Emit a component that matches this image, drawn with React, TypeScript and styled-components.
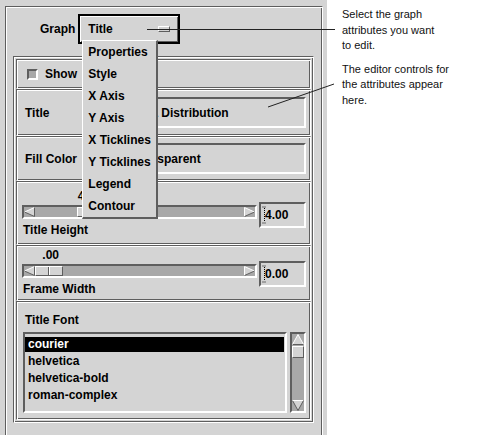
import React from 'react'
import styled, { createGlobalStyle, css } from 'styled-components'

const BG = '#d4d4d4'
const DARK = '#5e5e5e'
const LIGHT = '#ffffff'
const TROUGH = '#a8a8a8'

const MENU_ITEMS = [
  'Properties',
  'Style',
  'X Axis',
  'Y Axis',
  'X Ticklines',
  'Y Ticklines',
  'Legend',
  'Contour',
]

const FONTS = ['courier', 'helvetica', 'helvetica-bold', 'roman-complex']

const GlobalStyle = createGlobalStyle`
  html, body {
    margin: 0;
    padding: 0;
    background: #ffffff;
  }
  body {
    font-family: 'Liberation Sans', Arial, sans-serif;
  }
`

const etched = css`
  border: 1px solid;
  border-color: ${DARK} ${LIGHT} ${LIGHT} ${DARK};
  box-shadow: inset 1px 1px 0 ${LIGHT}, inset -1px -1px 0 ${DARK};
`

const sunken = css`
  border: 2px solid;
  border-color: ${DARK} ${LIGHT} ${LIGHT} ${DARK};
`

const Page = styled.div`
  position: relative;
  display: flex;
  width: 499px;
  height: 435px;
  overflow: hidden;
`

const EditorPanel = styled.div`
  width: 327px;
  flex-shrink: 0;
  box-sizing: border-box;
  padding: 6px 0 0 5px;
  background: ${BG};
  font-size: 12px;
  font-weight: bold;
  color: #000;
`

const OuterFrame = styled.div`
  ${etched};
  box-sizing: border-box;
  width: 318px;
  min-height: 450px;
`

const GraphRow = styled.div`
  display: flex;
  align-items: flex-start;
  gap: 3px;
  height: 49px;
  box-sizing: border-box;
  padding: 7px 0 0 34px;
`

const GraphLabel = styled.span`
  line-height: 30px;
`

const OptionButton = styled.div`
  position: relative;
  display: flex;
  align-items: center;
  box-sizing: border-box;
  width: 102px;
  height: 30px;
  border: 2px solid #000;
  padding-left: 8px;
  background: ${BG};
  box-shadow: inset 1px 1px 0 ${LIGHT}, inset -1px -1px 0 ${DARK};
`

const Indicator = styled.span`
  box-sizing: border-box;
  width: 12px;
  height: 6px;
  margin: 0 8px 0 auto;
  border: 1px solid;
  border-color: ${LIGHT} ${DARK} ${DARK} ${LIGHT};
`

const Menu = styled.ul`
  position: absolute;
  left: 2px;
  top: 24px;
  z-index: 3;
  width: 76px;
  margin: 0;
  padding: 0;
  list-style: none;
  box-sizing: border-box;
  background: ${BG};
  border-style: solid;
  border-width: 1px 2px 2px 1px;
  border-color: ${LIGHT} ${DARK} ${DARK} ${LIGHT};
`

const MenuItem = styled.li`
  height: 22px;
  line-height: 22px;
  padding-left: 5px;
  white-space: nowrap;
`

const InnerFrame = styled.div`
  ${etched};
  box-sizing: border-box;
  width: 301px;
  margin-left: 7px;
  padding: 2px;
`

const Section = styled.div<{ $h: number; $padTop?: number }>`
  ${etched};
  box-sizing: border-box;
  height: ${(p) => p.$h}px;
  padding-top: ${(p) => p.$padTop ?? 0}px;
`

const FieldRow = styled(Section)`
  display: flex;
  align-items: center;
  padding: 0 4px 0 8px;
`

const CheckRow = styled(Section)`
  display: flex;
  align-items: center;
  gap: 7px;
  padding-left: 10px;
`

const CheckBox = styled.span`
  ${sunken};
  box-sizing: border-box;
  width: 11px;
  height: 11px;
  background: ${TROUGH};
`

const TextField = styled.div<{ $w: number }>`
  ${sunken};
  box-sizing: border-box;
  width: ${(p) => p.$w}px;
  height: 31px;
  margin-left: auto;
  padding-left: 7px;
  display: flex;
  align-items: center;
  white-space: nowrap;
  overflow: hidden;
`

const ScaleBody = styled.div`
  display: flex;
  flex-direction: column;
  padding: 0 4px 0 5px;
`

const ValueLabel = styled.div`
  width: 28px;
  height: 14px;
  line-height: 14px;
  box-sizing: border-box;
  padding-right: 4px;
  text-align: right;
`

const TroughRow = styled.div`
  display: flex;
  align-items: center;
  gap: 2px;
  height: 14px;
  margin-top: 2px;
`

const Trough = styled.div`
  ${sunken};
  box-sizing: border-box;
  display: flex;
  width: 235px;
  height: 14px;
  background: ${TROUGH};
`

const Thumb = styled.div`
  position: relative;
  box-sizing: border-box;
  width: 28px;
  height: 100%;
  border: 1px solid;
  border-color: ${LIGHT} ${DARK} ${DARK} ${LIGHT};
  background: ${BG};
  &::after {
    content: '';
    position: absolute;
    left: 12px;
    top: 0;
    bottom: 0;
    width: 1px;
    background: ${DARK};
    box-shadow: 1px 0 0 ${LIGHT};
  }
`

const Spacer = styled.div`
  flex: 1;
`

const ValueField = styled.div`
  ${sunken};
  box-sizing: border-box;
  display: flex;
  align-items: center;
  width: 47px;
  height: 26px;
  margin-top: 6px;
  padding-left: 1px;
`

const Caption = styled.div`
  line-height: 14px;
  margin-top: 4px;
  padding-left: 1px;
`

const FontSection = styled(Section)`
  padding: 11px 4px 0 6px;
`

const FontLabel = styled.div`
  line-height: 14px;
  padding-left: 2px;
`

const ListRow = styled.div`
  display: flex;
  gap: 3px;
  height: 81px;
  margin-top: 5px;
`

const ListBox = styled.div`
  ${sunken};
  box-sizing: border-box;
  width: 264px;
  padding: 3px 1px 0 0;
`

const ListItem = styled.div<{ $selected?: boolean }>`
  height: 15px;
  line-height: 15px;
  margin-bottom: 2px;
  padding-left: 3px;
  background: ${(p) => (p.$selected ? '#000' : 'transparent')};
  color: ${(p) => (p.$selected ? '#fff' : '#000')};
`

const ScrollBar = styled.div`
  ${sunken};
  box-sizing: border-box;
  display: flex;
  flex-direction: column;
  width: 16px;
  background: ${TROUGH};
`

const ScrollThumb = styled.div`
  box-sizing: border-box;
  height: 12px;
  margin-top: 1px;
  border: 1px solid;
  border-color: ${LIGHT} ${DARK} ${DARK} ${LIGHT};
  background: ${BG};
`

const Notes = styled.div`
  flex: 1;
  padding: 7px 0 0 15px;
  font-size: 11px;
  line-height: 15.5px;
  color: #111;
`

const Note = styled.p`
  margin: 0 0 8px;
`

const Leaders = styled.svg`
  position: absolute;
  left: 0;
  top: 0;
  z-index: 5;
  pointer-events: none;
`

type Dir = 'left' | 'right' | 'up' | 'down'

const Arrow: React.FC<{ dir: Dir }> = ({ dir }) => {
  const horiz = dir === 'left' || dir === 'right'
  const w = horiz ? 11 : 12
  const h = horiz ? 10 : 11
  let pts: [number, number][]
  if (dir === 'left') pts = [[0.5, 5], [10.5, 0.5], [10.5, 9.5]]
  else if (dir === 'right') pts = [[10.5, 5], [0.5, 0.5], [0.5, 9.5]]
  else if (dir === 'up') pts = [[6, 0.5], [11.5, 10.5], [0.5, 10.5]]
  else pts = [[6, 10.5], [0.5, 0.5], [11.5, 0.5]]
  const [a, b, c] = pts
  return (
    <svg width={w} height={h} style={{ display: 'block', flexShrink: 0 }}>
      <polygon points={pts.map((p) => p.join(',')).join(' ')} fill={BG} />
      <line x1={a[0]} y1={a[1]} x2={b[0]} y2={b[1]} stroke={dir === 'down' ? DARK : LIGHT} />
      <line x1={b[0]} y1={b[1]} x2={c[0]} y2={c[1]} stroke={dir === 'right' || dir === 'down' ? LIGHT : DARK} />
      <line x1={c[0]} y1={c[1]} x2={a[0]} y2={a[1]} stroke={dir === 'up' ? LIGHT : DARK} />
    </svg>
  )
}

const IBeam: React.FC = () => (
  <svg width={5} height={18} style={{ display: 'block', marginRight: -2 }}>
    <line x1={2.5} y1={2} x2={2.5} y2={16} stroke="#000" strokeDasharray="1 1" />
    <line x1={0.5} y1={1} x2={4.5} y2={1} stroke="#000" strokeDasharray="1 1" />
    <line x1={0.5} y1={17} x2={4.5} y2={17} stroke="#000" strokeDasharray="1 1" />
  </svg>
)

// thumb travel inside the trough: 231 inner - two 11px arrows - 28px thumb
const TRAVEL = 181

const Scale: React.FC<{
  h: number
  padTop: number
  label: string
  value: string
  fraction: number
  caption: string
}> = ({ h, padTop, label, value, fraction, caption }) => {
  const offset = Math.round(fraction * TRAVEL)
  return (
    <Section $h={h} $padTop={padTop}>
      <ScaleBody>
        <ValueLabel style={{ marginLeft: 13 + offset }}>{label}</ValueLabel>
        <TroughRow>
          <Trough>
            <Arrow dir="left" />
            <Thumb style={{ marginLeft: offset }} />
            <Spacer />
            <Arrow dir="right" />
          </Trough>
          <ValueField>
            <IBeam />
            {value}
          </ValueField>
        </TroughRow>
        <Caption>{caption}</Caption>
      </ScaleBody>
    </Section>
  )
}

const App: React.FC = () => {
  return (
    <Page>
      <GlobalStyle />
      <EditorPanel>
        <OuterFrame>
          <GraphRow>
            <GraphLabel>Graph</GraphLabel>
            <OptionButton>
              Title
              <Indicator />
              <Menu>
                {MENU_ITEMS.map((item) => (
                  <MenuItem key={item}>{item}</MenuItem>
                ))}
              </Menu>
            </OptionButton>
          </GraphRow>
          <InnerFrame>
            <CheckRow $h={30}>
              <CheckBox />
              Show
            </CheckRow>
            <FieldRow $h={47}>
              Title
              <TextField $w={183}>Data Distribution</TextField>
            </FieldRow>
            <FieldRow $h={45}>
              Fill Color
              <TextField $w={183}>Transparent</TextField>
            </FieldRow>
            <Scale
              h={64}
              padTop={7}
              label="4.00"
              value="4.00"
              fraction={0.232}
              caption="Title Height"
            />
            <Scale
              h={56}
              padTop={2}
              label=".00"
              value="0.00"
              fraction={0}
              caption="Frame Width"
            />
            <FontSection $h={119}>
              <FontLabel>Title Font</FontLabel>
              <ListRow>
                <ListBox>
                  {FONTS.map((f, i) => (
                    <ListItem key={f} $selected={i === 0}>
                      {f}
                    </ListItem>
                  ))}
                </ListBox>
                <ScrollBar>
                  <Arrow dir="up" />
                  <ScrollThumb />
                  <Spacer />
                  <Arrow dir="down" />
                </ScrollBar>
              </ListRow>
            </FontSection>
          </InnerFrame>
        </OuterFrame>
      </EditorPanel>
      <Notes>
        <Note>
          Select the graph
          <br />
          attributes you want
          <br />
          to edit.
        </Note>
        <Note>
          The editor controls for
          <br />
          the attributes appear
          <br />
          here.
        </Note>
      </Notes>
      <Leaders width={499} height={435}>
        <line x1={147} y1={29.5} x2={335} y2={29.5} stroke="#222" />
        <line x1={268} y1={107} x2={334} y2={84} stroke="#222" />
      </Leaders>
    </Page>
  )
}

export default App
